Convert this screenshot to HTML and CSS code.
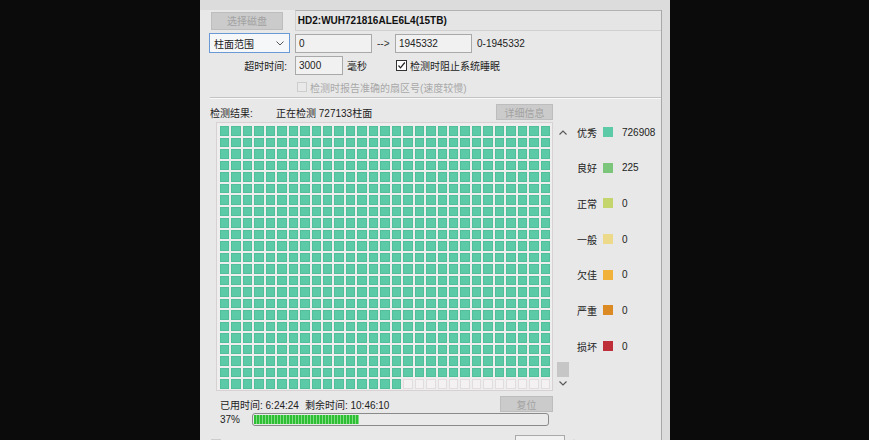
FILE: index.html
```html
<!DOCTYPE html>
<html lang="zh-CN">
<head>
<meta charset="utf-8">
<title>检测</title>
<link rel="stylesheet" href="styles.css">
</head>
<body>
<div class="side"></div>
<div class="window">
  <div class="panel">
    <div class="row r1">
      <button class="btn btn-select" disabled>选择磁盘</button>
      <div class="diskname">HD2:WUH721816ALE6L4(15TB)</div>
    </div>
    <div class="row r2">
      <div class="select"><span>柱面范围</span>
        <svg class="chev" width="8" height="5" viewBox="0 0 8 5"><polyline points="0.5,0.5 4,4 7.5,0.5" fill="none" stroke="#555" stroke-width="1"/></svg>
      </div>
      <div class="input in-from">0</div>
      <span class="arrow">--&gt;</span>
      <div class="input in-to">1945332</div>
      <span class="range">0-1945332</span>
    </div>
    <div class="row r3">
      <span class="label">超时时间:</span>
      <div class="input in-timeout">3000</div>
      <span class="unit">毫秒</span>
      <span class="check">
        <svg width="9" height="9" viewBox="0 0 9 9"><polyline points="1.5,4.5 3.5,6.8 7.8,1.5" fill="none" stroke="#222" stroke-width="1.2"/></svg>
      </span>
      <span class="check-text">检测时阻止系统睡眠</span>
    </div>
    <div class="row r4">
      <span class="check check-off"></span>
      <span class="check-text">检测时报告准确的扇区号(速度较慢)</span>
    </div>
    <div class="sep"></div>
    <div class="row r5">
      <span class="title">检测结果:</span>
      <span class="status">正在检测 727133柱面</span>
      <button class="btn detail" disabled>详细信息</button>
    </div>
    <div class="main">
      <div class="map"><div class="cells" id="cells"></div></div>
      <div class="scroll">
        <svg class="sarrow up" width="8" height="5" viewBox="0 0 8 5"><polyline points="0.5,4.5 4,1 7.5,4.5" fill="none" stroke="#555" stroke-width="1.1"/></svg>
        <div class="track"></div>
        <div class="thumb"></div>
        <svg class="sarrow down" width="8" height="5" viewBox="0 0 8 5"><polyline points="0.5,0.5 4,4 7.5,0.5" fill="none" stroke="#555" stroke-width="1.1"/></svg>
      </div>
      <ul class="legend">
        <li><span class="name">优秀</span><span class="sw c1"></span><span class="val">726908</span></li>
        <li><span class="name">良好</span><span class="sw c2"></span><span class="val">225</span></li>
        <li><span class="name">正常</span><span class="sw c3"></span><span class="val">0</span></li>
        <li><span class="name">一般</span><span class="sw c4"></span><span class="val">0</span></li>
        <li><span class="name">欠佳</span><span class="sw c5"></span><span class="val">0</span></li>
        <li><span class="name">严重</span><span class="sw c6"></span><span class="val">0</span></li>
        <li><span class="name">损坏</span><span class="sw c7"></span><span class="val">0</span></li>
      </ul>
    </div>
    <div class="row r6">
      <span>已用时间: 6:24:24</span>
      <span class="remain">剩余时间: 10:46:10</span>
      <button class="btn reset" disabled>复位</button>
    </div>
    <div class="row r7">
      <span class="pct">37%</span>
      <div class="progress"><div class="fill" style="width:105px"></div></div>
    </div>
    <div class="row r8">
      <span class="check check-off"></span>
      <span class="check-text">检测时如发现读写速度低于此值就标记为坏道</span>
      <div class="input in-speed">1150</div>
      <span class="unit">毫秒</span>
    </div>
  </div>
</div>
<div class="side"></div>
<script src="script.js"></script>
</body>
</html>
```
FILE: styles.css
```css
* { box-sizing: border-box; }
html, body { margin: 0; padding: 0; }
body {
  background: #0b0b0b;
  width: 869px;
  height: 440px;
  overflow: hidden;
  display: flex;
  font-family: "Liberation Sans", "Noto Sans CJK SC", sans-serif;
  font-size: 10px;
  color: #222;
}
.side { width: 200px; flex: none; }
.window {
  width: 470px;
  height: 440px;
  flex: none;
  background: #dcdcdc;
  overflow: hidden;
}
.panel {
  width: 462px;
  height: 440px;
  background: #e8e8e8;
  border-right: 1px solid #a8a8a8;
}
.row { display: flex; align-items: center; white-space: nowrap; }

.btn {
  font: inherit;
  height: 18px;
  border: 1px solid #bdbdbd;
  background: #cbcbcb;
  color: #a2a2a2;
  padding: 0;
  display: flex;
  align-items: center;
  justify-content: center;
}

.r1 { margin-top: 10px; height: 21px; padding-left: 11px; }
.btn-select { width: 72px; }
.diskname {
  margin-left: 12px;
  width: 367px;
  height: 21px;
  border: 1px solid #d0d0d0;
  border-top-color: #b2b2b2;
  border-right: none;
  background: #e5e5e5;
  font-weight: bold;
  color: #111;
  padding-left: 2px;
  display: flex;
  align-items: center;
}

.r2 { margin-top: 2px; height: 20px; padding-left: 9px; }
.select {
  width: 81px;
  height: 20px;
  border: 1px solid #6a9ad6;
  background: #f6f7f9;
  padding: 0 5px 0 4px;
  display: flex;
  align-items: center;
  justify-content: space-between;
}
.input {
  height: 19px;
  border: 1px solid #a9a9a9;
  background: #f1f1f1;
  padding-left: 3px;
  display: flex;
  align-items: center;
}
.in-from { margin-left: 5px; width: 77px; }
.arrow { margin: 0 5px; width: 13px; color: #333; }
.in-to { width: 77px; }
.range { margin-left: 5px; }

.r3 { margin-top: 3px; height: 19px; padding-left: 9px; }
.label { width: 78px; text-align: right; }
.in-timeout { margin-left: 8px; width: 48px; }
.unit { margin-left: 4px; }
.check {
  width: 11px;
  height: 11px;
  border: 1px solid #333;
  background: #fff;
  margin-left: 29px;
  display: flex;
  align-items: center;
  justify-content: center;
  flex: none;
}
.check-text { margin-left: 3px; }

.r4 { margin-top: 5px; height: 14px; padding-left: 97px; color: #a8a8a8; }
.check.check-off {
  margin-left: 0;
  width: 10px;
  height: 10px;
  border-color: #cdcdcd;
  background: #e9e9e9;
}

.sep {
  margin: 3px 0 0 10px;
  width: 451px;
  height: 2px;
  border-top: 1px solid #c4c4c4;
  border-bottom: 1px solid #f8f8f8;
}

.r5 { margin: 5px 0 0 10px; height: 16px; width: 343px; }
.r5 .title { width: 66px; }
.detail { margin-left: auto; width: 57px; height: 16px; }

.main { margin-top: 2px; display: flex; height: 269px; }
.map {
  margin-left: 16px;
  width: 337px;
  height: 269px;
  border: 1px solid #d8d1d3;
  background: #efeeee;
  padding: 3px 0 0 3px;
}
.cells {
  display: grid;
  grid-template-columns: repeat(29, 1fr);
  grid-template-rows: repeat(23, 1fr);
  gap: 2px;
  width: 330px;
  height: 263px;
}
.cell.ok {
  background: #5ccaa6;
  box-shadow: inset 0 0 0 1px #52bf9b;
}
.cell.empty {
  background: #f3f1f1;
  box-shadow: inset 0 0 0 1px #e3dcdd;
}

.scroll {
  width: 14px;
  margin-left: 3px;
  display: flex;
  flex-direction: column;
  align-items: center;
}
.sarrow.up { margin-top: 8px; }
.track { flex: 1; }
.thumb { width: 12px; height: 15px; background: #c6c6c6; }
.sarrow.down { margin: 4px 0 5px; }

.legend {
  list-style: none;
  margin: 0 0 0 7px;
  padding: 3px 0 0 0;
  display: flex;
  flex-direction: column;
  gap: 21.7px;
}
.legend li { display: flex; align-items: center; height: 14px; }
.legend .name { width: 26px; }
.sw { width: 10px; height: 10px; }
.val { margin-left: 9px; }
.c1 { background: #5ccaa6; }
.c2 { background: #7cc67b; }
.c3 { background: #c4d56e; }
.c4 { background: #edd98a; }
.c5 { background: #f0b23a; }
.c6 { background: #dc8a24; }
.c7 { background: #bf2f3a; }

.r6 { margin-top: 5px; height: 16px; padding-left: 20px; width: 353px; }
.remain { margin-left: 6px; }
.reset { margin-left: auto; width: 53px; height: 16px; }

.r7 { margin-top: 1px; height: 13px; padding-left: 20px; }
.pct { width: 32px; }
.progress {
  width: 297px;
  height: 13px;
  border: 1px solid #8a8a8a;
  border-radius: 3px;
  background: #eaeaea;
  padding: 1px;
}
.fill {
  height: 100%;
  background: repeating-linear-gradient(to right, #2fbf34 0 2px, #7fdc80 2px 3px);
}

.r8 { margin-top: 9px; height: 18px; padding-left: 11px; }
.r8 .check-text { width: 290px; }
.in-speed { margin-left: 1px; width: 50px; }
```
FILE: script.js
```js
var el = document.getElementById('cells');
var cols = 29, rows = 23;
var total = cols * rows;
var filled = (rows - 1) * cols + 16;
var html = '';
for (var i = 0; i < total; i++) {
  html += '<div class="cell ' + (i < filled ? 'ok' : 'empty') + '"></div>';
}
el.innerHTML = html;
```
